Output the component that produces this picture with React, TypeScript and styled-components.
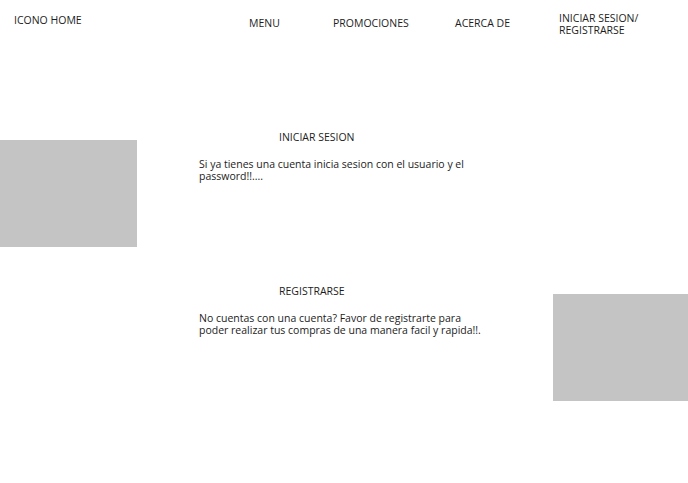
import styled, { createGlobalStyle } from "styled-components";

const GlobalStyle = createGlobalStyle`
  html, body {
    margin: 0;
    padding: 0;
    background: #ffffff;
  }
  body {
    font-family: "Open Sans", "DejaVu Sans", sans-serif;
    color: #1c1c1c;
  }
`;

const Page = styled.div`
  width: 688px;
  height: 483px;
  overflow: hidden;
`;

const Header = styled.header`
  display: flex;
  align-items: flex-start;
  height: 131px;
`;

const Logo = styled.div`
  width: 235px;
  padding: 14px 0 0 14px;
  font-size: 10.5px;
  line-height: 12px;
`;

const Nav = styled.nav`
  display: grid;
  grid-template-columns: 84px 122px 104px auto;
  padding-top: 12px;
`;

const NavItem = styled.a<{ $offset?: number }>`
  display: block;
  margin-top: ${(p) => p.$offset ?? 5}px;
  font-size: 10.5px;
  line-height: 12px;
  color: inherit;
  text-decoration: none;
`;

const Section = styled.section<{ $flip?: boolean }>`
  display: grid;
  grid-template-columns: 137px 62px 292px 62px 135px;
  align-items: start;
`;

const Placeholder = styled.div<{ $col: number }>`
  grid-column: ${(p) => p.$col};
  grid-row: 1;
  height: 107px;
  margin-top: 9px;
  background: #c4c4c4;
`;

const Content = styled.div`
  grid-column: 3;
  grid-row: 1;
`;

const Title = styled.h2`
  margin: 0 0 15px 80px;
  font-size: 10.5px;
  font-weight: 400;
  line-height: 12px;
`;

const Text = styled.p`
  margin: 0;
  width: 284px;
  font-size: 10.5px;
  line-height: 12px;
`;

const Spacer = styled.div`
  height: 38px;
`;

export default function App() {
  return (
    <Page>
      <GlobalStyle />
      <Header>
        <Logo>ICONO HOME</Logo>
        <Nav>
          <NavItem>MENU</NavItem>
          <NavItem>PROMOCIONES</NavItem>
          <NavItem>ACERCA DE</NavItem>
          <NavItem $offset={0}>
            INICIAR SESION/
            <br />
            REGISTRARSE
          </NavItem>
        </Nav>
      </Header>
      <Section>
        <Placeholder $col={1} />
        <Content>
          <Title>INICIAR SESION</Title>
          <Text>
            Si ya tienes una cuenta inicia sesion con el usuario y el
            password!!....
          </Text>
        </Content>
      </Section>
      <Spacer />
      <Section>
        <Content>
          <Title>REGISTRARSE</Title>
          <Text>
            No cuentas con una cuenta? Favor de registrarte para poder
            realizar tus compras de una manera facil y rapida!!.
          </Text>
        </Content>
        <Placeholder $col={5} />
      </Section>
    </Page>
  );
}
